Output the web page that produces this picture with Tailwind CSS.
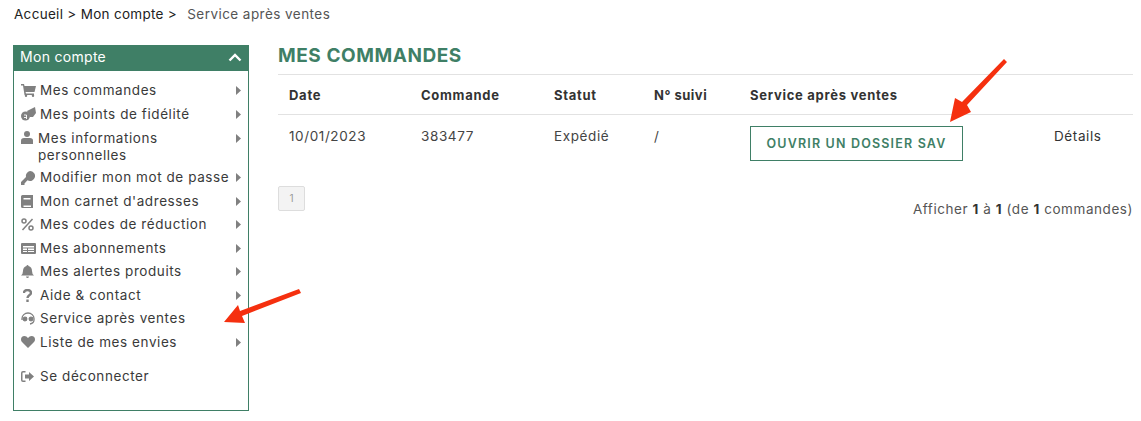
<!DOCTYPE html>
<html lang="fr"><head><meta charset="utf-8"><script src="https://cdn.jsdelivr.net/npm/@tailwindcss/browser@4"></script></head>
<body class="bg-white">
<div class="relative w-[1141px] h-[421px] overflow-hidden font-['Inter',sans-serif] text-[13.5px] text-[#333] oldstyle-nums">
  <div class="h-[45px] pl-[14px] pt-[5px] leading-[18px] text-[13.5px] tracking-[0.3px] text-[#222]">Accueil &gt; Mon compte &gt; <span class="ml-[6px] tracking-[0.45px] text-[#555]">Service après ventes</span></div>
  <div class="flex pl-[13px] pr-[8px]">
    <aside class="w-[236px] h-[366px] border border-[#3f7f66]">
      <div class="h-[25px] bg-[#3f7f66] text-white flex items-center justify-between pl-[6px] pr-[6px] text-[14px] tracking-[0.3px]">
        <span class="-mt-[4px]">Mon compte</span>
        <svg class="-mt-[3px]" width="14" height="9" viewBox="0 0 14 9" fill="none" stroke="#fff" stroke-width="2.4"><path d="M1.5 7.5 7 2l5.5 5.5"/></svg>
      </div>
      <ul class="pt-[8px] pl-[7px] pr-[7px] text-[13.5px] text-[#3a3a3a] tracking-[0.58px] leading-[17px]">
        <li class="h-[23.5px] flex items-center"><span class="w-[19px] shrink-0"><svg width="15" height="13" viewBox="0 0 15 13" fill="#808080"><path d="M0 0h3l.5 2H15l-1.500 6H4.500L5 9.500h8V11H3.500L2 1.500H0z"/><circle cx="5" cy="11.800" r="1.200"/><circle cx="12" cy="11.800" r="1.200"/></svg></span><span class="grow">Mes commandes</span><svg width="5" height="9" viewBox="0 0 5 9" fill="#808080"><path d="M0 0l5 4.500L0 9z"/></svg></li>
        <li class="h-[23.5px] flex items-center"><span class="w-[19px] shrink-0"><svg width="15" height="14" viewBox="0 0 15 14" fill="#808080"><path d="M6 4 14 0l1 6-3 4H9z"/><circle cx="4.500" cy="9" r="4.500"/><path d="M3 8h2.500v4M3 10.500h2.500" fill="none" stroke="#fff" stroke-width=".9"/></svg></span><span class="grow">Mes points de fidélité</span><svg width="5" height="9" viewBox="0 0 5 9" fill="#808080"><path d="M0 0l5 4.500L0 9z"/></svg></li>
        <li class="h-[40px] flex items-start pt-[4px]"><span class="w-[17px] shrink-0 pt-[1px]"><svg width="12" height="13" viewBox="0 0 12 13" fill="#808080"><circle cx="6" cy="3" r="3"/><path d="M0 13V9.500Q0 7 3 7h6q3 0 3 2.500V13z"/></svg></span><span class="grow">Mes informations<br>personnelles</span><svg class="mt-[4px]" width="5" height="9" viewBox="0 0 5 9" fill="#808080"><path d="M0 0l5 4.500L0 9z"/></svg></li>
        <li class="h-[23.500px] flex items-center"><span class="w-[19px] shrink-0"><svg width="14" height="14" viewBox="0 0 14 14" fill="#808080"><path d="M9 0a5 5 0 1 1-2.500 9.300L3.500 12.500V14H0v-3l5-5A5 5 0 0 1 9 0z"/></svg></span><span class="grow">Modifier mon mot de passe</span><svg width="5" height="9" viewBox="0 0 5 9" fill="#808080"><path d="M0 0l5 4.500L0 9z"/></svg></li>
        <li class="h-[23.500px] flex items-center"><span class="w-[19px] shrink-0"><svg width="12" height="13" viewBox="0 0 12 13" fill="#808080"><path fill-rule="evenodd" d="M1.500 0H12v13H1.500Q0 13 0 11.500v-10Q0 0 1.500 0zM2.500 3v1.500h7V3zm0 7.500V12H10v-1.500z"/></svg></span><span class="grow">Mon carnet d'adresses</span><svg width="5" height="9" viewBox="0 0 5 9" fill="#808080"><path d="M0 0l5 4.500L0 9z"/></svg></li>
        <li class="h-[23.500px] flex items-center"><span class="w-[19px] shrink-0"><svg width="13" height="13" viewBox="0 0 13 13" fill="none" stroke="#808080" stroke-width="1.500"><path d="M11.500 1 1.500 12"/><circle cx="3" cy="3" r="2"/><circle cx="10" cy="10" r="2"/></svg></span><span class="grow">Mes codes de réduction</span><svg width="5" height="9" viewBox="0 0 5 9" fill="#808080"><path d="M0 0l5 4.500L0 9z"/></svg></li>
        <li class="h-[23.500px] flex items-center"><span class="w-[19px] shrink-0"><svg width="15" height="11" viewBox="0 0 15 11" fill="#808080"><path fill-rule="evenodd" d="M1 0h13q1 0 1 1v9q0 1-1 1H1q-1 0-1-1V1q0-1 1-1zm1 3v1.500h11V3zm0 2.500V7h4V5.500zm5 0V7h6V5.500zM2 8v1h4V8zm5 0v1h6V8z"/></svg></span><span class="grow">Mes abonnements</span><svg width="5" height="9" viewBox="0 0 5 9" fill="#808080"><path d="M0 0l5 4.500L0 9z"/></svg></li>
        <li class="h-[23.500px] flex items-center"><span class="w-[19px] shrink-0"><svg width="13" height="13" viewBox="0 0 13 13" fill="#808080"><path d="M6.500 0Q7.500 0 7.500 1 11 2 11 6q0 3 2 4.500H0Q2 9 2 6 2 2 5.500 1q0-1 1-1zM5 11.500h3Q7.700 13 6.500 13T5 11.500z"/></svg></span><span class="grow">Mes alertes produits</span><svg width="5" height="9" viewBox="0 0 5 9" fill="#808080"><path d="M0 0l5 4.500L0 9z"/></svg></li>
        <li class="h-[23.500px] flex items-center"><span class="w-[19px] shrink-0 pl-[2px]"><svg width="9" height="13" viewBox="0 0 9 13" fill="none" stroke="#808080" stroke-width="2.400"><path d="M1 4Q1 1 4.500 1T8 4C8 6 4.500 6 4.500 9"/><path d="M4.500 10.500V13"/></svg></span><span class="grow">Aide &amp; contact</span><svg width="5" height="9" viewBox="0 0 5 9" fill="#808080"><path d="M0 0l5 4.500L0 9z"/></svg></li>
        <li class="h-[23.500px] flex items-center"><span class="w-[19px] shrink-0"><svg width="14" height="13" viewBox="0 0 14 13" fill="none" stroke="#808080" stroke-width="1.300"><path d="M1 8V6.500a6 5.500 0 0 1 12 0V8q0 3-4 4"/><circle cx="4" cy="7" r="1.800" fill="#808080"/><circle cx="10" cy="7" r="1.800" fill="#808080"/></svg></span><span class="grow">Service après ventes</span></li>
        <li class="h-[23.500px] flex items-center"><span class="w-[19px] shrink-0"><svg width="14" height="12" viewBox="0 0 14 12" fill="#808080"><path d="M7 12 1 6Q0 5 0 3.500 0 0 3.500 0 5.500 0 7 2 8.500 0 10.500 0 14 0 14 3.500 14 5 13 6z"/></svg></span><span class="grow">Liste de mes envies</span><svg width="5" height="9" viewBox="0 0 5 9" fill="#808080"><path d="M0 0l5 4.500L0 9z"/></svg></li>
        <li class="h-[23.500px] mt-[11px] flex items-center"><span class="w-[19px] shrink-0"><svg width="13" height="11" viewBox="0 0 13 11" fill="#808080"><path d="M4.500 0v1.500H2q-.5 0-.5.500v7q0 .5.500.5h2.500V11H2q-2 0-2-2V2q0-2 2-2z"/><path d="M8 1l5 4.500L8 10V7.500H4v-4h4z"/></svg></span><span class="grow">Se déconnecter</span></li>
      </ul>
    </aside>
    <main class="ml-[29px] w-[855px]">
      <h1 class="h-[29px] text-[19px] leading-[22px] font-bold tracking-[0.55px] text-[#3f7f66]">MES COMMANDES</h1>
      <div class="grid grid-cols-[132px_133px_100px_96px_304px_79px] h-[41px] items-center border-y border-[#e2e2e2] pl-[11px] pt-[2px] font-bold text-[13px] tracking-[0.72px] text-[#333]">
        <span>Date</span><span>Commande</span><span>Statut</span><span class="tracking-[0.5px]">N° suivi</span><span class="col-span-2">Service après ventes</span>
      </div>
      <div class="grid grid-cols-[132px_133px_100px_96px_304px_79px] h-[71px] pl-[11px] text-[13.5px] tracking-[0.6px] text-[#444]">
        <span class="pt-[11px]">10/01/2023</span><span class="pt-[11px]">383477</span><span class="pt-[11px]">Expédié</span><span class="pt-[11px]">/</span>
        <span class="pt-[11px]"><a class="flex items-center justify-center w-[213px] h-[35px] pt-[2px] border border-[#3f7f66] text-[#3f7f66] font-semibold text-[12.500px] tracking-[1.18px]">OUVRIR UN DOSSIER SAV</a></span>
        <span class="pt-[11px] text-[#333]">Détails</span>
      </div>
      <div class="flex justify-between">
        <span class="flex items-center justify-center w-[27px] h-[25px] bg-[#f3f3f3] border border-[#ddd] rounded-[2px] text-[10px] text-[#999]">1</span>
        <p class="pt-[14px] text-[13.500px] tracking-[0.56px] leading-[18px] text-[#555]">Afficher <b class="text-[#333]">1</b> à <b class="text-[#333]">1</b> (de <b class="text-[#333]">1</b> commandes)</p>
      </div>
    </main>
  </div>
  <svg class="absolute left-0 top-0 pointer-events-none" width="1141" height="421" fill="#f5300f" stroke="none">
    <path d="M1004 59 1007 62 967 105 971 112 950 122 955 98 962 102z"/>
    <path d="M299 289 301 293 242 316 245 323 224 322 238 305 240 311z"/>
  </svg>
</div>
</body></html>
